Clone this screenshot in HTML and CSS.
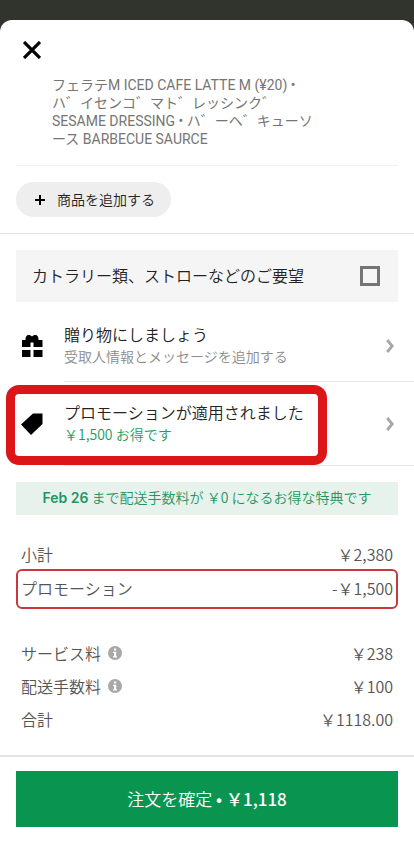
FILE: index.html
```html
<!DOCTYPE html>
<html lang="ja">
<head>
<meta charset="utf-8">
<meta name="viewport" content="width=device-width, initial-scale=1">
<title>注文の確認</title>
<link rel="stylesheet" href="styles.css">
</head>
<body>
<main class="sheet">
  <header class="sheet-header">
    <button class="close" type="button" aria-label="閉じる">
      <svg viewBox="0 0 18 18" width="18" height="18"><path d="M1 1L17 17M17 1L1 17" fill="none" stroke="#000" stroke-width="3.2"/></svg>
    </button>
  </header>

  <p class="item">フェラテM ICED CAFE LATTE M (¥20) •<br>ハ゛イセンコ゛マト゛レッシンク゛<br>SESAME DRESSING • ハ゛ーヘ゛キューソ<br>ース BARBECUE SAURCE</p>

  <div class="add-bar">
    <button class="add" type="button">
      <svg viewBox="0 0 10 10" width="10" height="10"><path d="M5 0V10M0 5H10" stroke="#000" stroke-width="2"/></svg>
      <span>商品を追加する</span>
    </button>
  </div>

  <label class="cutlery">
    <span>カトラリー類、ストローなどのご要望</span>
    <input type="checkbox">
  </label>

  <div class="options">
    <button class="option gift" type="button">
      <svg class="option-icon" viewBox="0 0 22 24" width="22" height="24">
        <path d="M1 6H4.500C4.300 3 5.500 1 7.500 1C9.200 1 10.400 1.600 11 2.600C11.600 1.600 12.800 1 14.500 1C16.500 1 17.700 3 17.500 6H21.500V13H12.500V8.500H9.500V13H1Z" fill="#000"/>
        <path d="M1 16H9.500V23H1ZM12.500 16H21.500V23H12.500Z" fill="#000"/>
      </svg>
      <span class="option-text"><span class="option-title">贈り物にしましょう</span><span class="option-note">受取人情報とメッセージを追加する</span></span>
      <svg class="chevron" viewBox="0 0 8 14" width="8" height="14"><path d="M1.200 1L6.200 7L1.200 13" fill="none" stroke="#a6a6a6" stroke-width="2.800"/></svg>
    </button>
    <button class="option promo" type="button">
      <svg class="option-icon" viewBox="0 0 22 24" width="22" height="24"><path d="M12 1.500H21.500V12L10 23L0 12.500Z" fill="#000"/></svg>
      <span class="option-text"><span class="option-title">プロモーションが適用されました</span><span class="option-note saving">￥1,500 お得です</span></span>
      <svg class="chevron" viewBox="0 0 8 14" width="8" height="14"><path d="M1.200 1L6.200 7L1.200 13" fill="none" stroke="#a6a6a6" stroke-width="2.800"/></svg>
    </button>
  </div>

  <p class="banner"><b>Feb 26</b> まで配送手数料が ￥0 になるお得な特典です</p>

  <dl class="totals">
    <div class="line"><dt>小計</dt><dd>￥2,380</dd></div>
    <div class="line marked"><dt>プロモーション</dt><dd>-￥1,500</dd></div>
    <div class="line"><dt>サービス料
      <svg class="info" viewBox="0 0 14 14" width="14" height="14"><circle cx="7" cy="7" r="7" fill="#a8a8a8"/><path d="M6 2.500H8.200V4.500H6ZM5 5.800H8.200V10.300H9V11.500H5V10.300H6V7H5Z" fill="#fff"/></svg></dt><dd>￥238</dd></div>
    <div class="line"><dt>配送手数料
      <svg class="info" viewBox="0 0 14 14" width="14" height="14"><circle cx="7" cy="7" r="7" fill="#a8a8a8"/><path d="M6 2.500H8.200V4.500H6ZM5 5.800H8.200V10.300H9V11.500H5V10.300H6V7H5Z" fill="#fff"/></svg></dt><dd>￥100</dd></div>
    <div class="line"><dt>合計</dt><dd>￥1118.00</dd></div>
  </dl>

  <footer class="checkout">
    <button class="confirm" type="button">注文を確定<b> • ￥1,118</b></button>
  </footer>
</main>
</body>
</html>
```
FILE: styles.css
```css
*,
*::before,
*::after {
  box-sizing: border-box;
}

body {
  margin: 0;
  padding-top: 20px;
  min-height: 100vh;
  display: flex;
  background: #31332d;
  color: #222;
  font-family: "Noto Sans CJK JP", sans-serif;
  font-size: 16px;
  font-weight: 350;
}

button {
  margin: 0;
  padding: 0;
  border: 0;
  background: none;
  color: inherit;
  font: inherit;
  cursor: pointer;
}

svg {
  display: block;
  flex: none;
}

.sheet {
  flex: 1;
  min-width: 0;
  background: #fff;
  border-radius: 12px 12px 0 0;
}

.sheet-header {
  padding: 16px 18px 12px;
}

.close {
  display: grid;
  place-items: center;
  width: 28px;
  height: 28px;
}

.item {
  margin: 0 16px;
  padding: 0 36px 17px;
  border-bottom: 1px solid #f2f2f2;
  color: #757575;
  font-family: Roboto, "Noto Sans CJK JP", sans-serif;
  font-size: 14px;
  font-weight: 400;
  line-height: 18px;
  white-space: nowrap;
}

.add-bar {
  padding: 16px;
  border-bottom: 1px solid #e4e4e4;
}

.add {
  display: flex;
  align-items: center;
  gap: 12px;
  height: 35px;
  padding: 0 16px 0 19px;
  border-radius: 18px;
  background: #eee;
  font-size: 14px;
}

.add span {
  padding-bottom: 2px;
}

.cutlery {
  display: flex;
  align-items: center;
  justify-content: space-between;
  margin: 16px 16px 8px;
  padding: 0 18px 0 16px;
  height: 52px;
  background: #f5f5f5;
}

.cutlery span {
  padding-bottom: 2px;
}

.cutlery input {
  appearance: none;
  margin: 0;
  width: 20px;
  height: 20px;
  border: 3px solid #757575;
}

.option {
  position: relative;
  display: flex;
  align-items: center;
  width: 100%;
  padding: 0 20px 0 21px;
  text-align: left;
}

.option::after {
  content: "";
  position: absolute;
  left: 64px;
  right: 0;
  bottom: 0;
  border-bottom: 1px solid #e8e8e8;
}

.gift {
  height: 72px;
}

.promo {
  height: 84px;
}

.promo::before {
  content: "";
  position: absolute;
  z-index: 1;
  left: 6px;
  top: 3px;
  width: 321px;
  height: 80px;
  border: 9px solid #dc1519;
  border-radius: 13px;
}

.option-text {
  flex: 1;
  margin-left: 21px;
  padding-bottom: 2px;
}

.option-title,
.option-note {
  display: block;
  line-height: 22px;
}

.option-note {
  color: #8c8c8c;
  font-size: 14px;
}

.saving {
  color: #1c9c60;
}

.banner {
  margin: 16px 16px 22px;
  padding-bottom: 2px;
  background: #e7f2ed;
  color: #1f9660;
  font-size: 14px;
  line-height: 31px;
  text-align: center;
}

.banner b {
  font-family: Inter, sans-serif;
  font-weight: 600;
}

.totals {
  margin: 0 16px 20px;
  color: #555;
}

.line {
  display: flex;
  align-items: center;
  justify-content: space-between;
  height: 33px;
  padding: 0 5px;
}

.line dt {
  display: flex;
  align-items: center;
  gap: 7px;
}

.line dd {
  margin: 0;
}

.marked {
  height: 40px;
  margin: -1px 0 27px;
  padding: 0 3px 2px;
  border: 2px solid #c9393c;
  border-radius: 6px;
}

.checkout {
  padding: 14px 16px 33px;
  border-top: 2px solid #e4e4e4;
}

.confirm {
  display: block;
  width: 100%;
  height: 56px;
  padding-bottom: 2px;
  background: #09954f;
  color: #fff;
  font-size: 17px;
}

.confirm b {
  font-weight: 500;
}
```
